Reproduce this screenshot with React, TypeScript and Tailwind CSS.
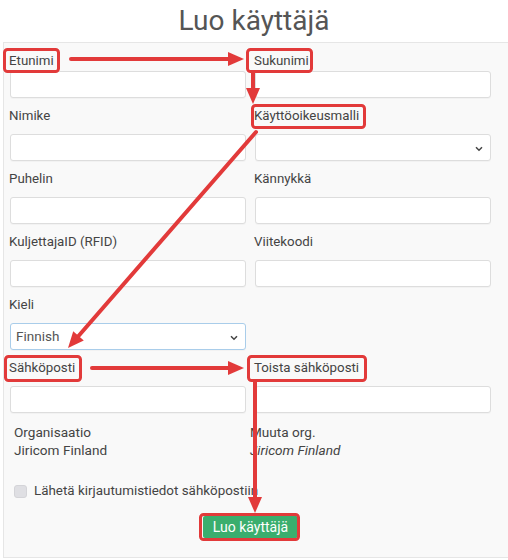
import React from "react";

const RED = "#e23a3a";

function Arrow({ x1, y1, x2, y2 }: { x1: number; y1: number; x2: number; y2: number }) {
  const dx = x2 - x1;
  const dy = y2 - y1;
  const len = Math.sqrt(dx * dx + dy * dy);
  const ux = dx / len;
  const uy = dy / len;
  const hl = 16;
  const hw = 7;
  const bx = x2 - ux * hl;
  const by = y2 - uy * hl;
  const px = -uy;
  const py = ux;
  const pts = `${x2},${y2} ${bx + px * hw},${by + py * hw} ${bx - px * hw},${by - py * hw}`;
  return (
    <g>
      <line x1={x1} y1={y1} x2={bx + ux * 2} y2={by + uy * 2} stroke={RED} strokeWidth={4} strokeLinecap="round" />
      <polygon points={pts} fill={RED} />
    </g>
  );
}

function Field({ label, first, select, value, focus }: { label: string; first?: boolean; select?: boolean; value?: string; focus?: boolean }) {
  return (
    <div className="flex flex-col">
      <div className={`h-5 leading-5 text-[13.3px] text-[#444] -ml-[1px] ${first ? "mb-0" : "mb-2"}`}>{label}</div>
      <div
        className={`relative h-[27px] rounded-[3px] bg-white border ${focus ? "border-[#a9cdea]" : "border-[#dddddd]"} shadow-[0_1px_1px_rgba(0,0,0,0.03)] flex items-center px-[5px] text-[13.5px] text-[#555]`}
      >
        {value}
        {select && (
          <svg className="absolute right-[7px] top-[11px]" width="8" height="6" viewBox="0 0 8 6">
            <path d="M1 1.2 L4 4.2 L7 1.2" fill="none" stroke="#444" strokeWidth="1.5" />
          </svg>
        )}
      </div>
    </div>
  );
}

export default function App() {
  return (
    <div className="relative w-[508px] h-[560px] bg-white overflow-hidden font-['Roboto',sans-serif]">
      <h1 className="h-[42px] text-center text-[28px] leading-[42px] text-[#555] font-normal">Luo käyttäjä</h1>
      <div className="ml-[3px] w-[520px] h-[516px] border border-[#e6e6e6] bg-[#f9f9f9] pl-[6px] pt-[8px]">
        <div className="w-[481px] grid grid-cols-[236px_236px] gap-x-[9px] gap-y-[8px]">
          <Field label="Etunimi" first />
          <Field label="Sukunimi" first />
          <Field label="Nimike" />
          <Field label="Käyttöoikeusmalli" select />
          <Field label="Puhelin" />
          <Field label="Kännykkä" />
          <Field label="KuljettajaID (RFID)" />
          <Field label="Viitekoodi" />
          <Field label="Kieli" select value="Finnish" focus />
          <div />
          <Field label="Sähköposti" />
          <Field label="Toista sähköposti" />
        </div>
        <div className="mt-[10px] grid grid-cols-[236px_1fr] pl-[4px] text-[13.6px] leading-[18px] text-[#444]">
          <div>
            <div>Organisaatio</div>
            <div>Jiricom Finland</div>
          </div>
          <div>
            <div>Muuta org.</div>
            <div className="italic">Jiricom Finland</div>
          </div>
        </div>
        <div className="mt-[22px] pl-[4px] h-5 flex items-center gap-[7px] text-[13.4px] text-[#444]">
          <div className="w-[13px] h-[13px] rounded-[3px] bg-[#dfdfe3] border border-[#d4d4d8]" />
          <span>Lähetä kirjautumistiedot sähköpostiin</span>
        </div>
        <div className="w-[481px] flex justify-center mt-[15px]">
          <div className="h-[22px] w-[95px] bg-[#3aae6e] text-white text-[14px] leading-[22px] text-center rounded-[2px]">
            Luo käyttäjä
          </div>
        </div>
      </div>
      <svg className="absolute inset-0 pointer-events-none" width="508" height="560" viewBox="0 0 508 560">
        <g fill="none" stroke={RED} strokeWidth={3}>
          <rect x={4.5} y={49.5} width={54} height={22} rx={3} />
          <rect x={247.5} y={49.5} width={64} height={22} rx={3} />
          <rect x={252.5} y={105.5} width={112} height={22} rx={3} />
          <rect x={5.5} y={356.5} width={75} height={24} rx={3} />
          <rect x={248.5} y={356.5} width={117} height={24} rx={3} />
          <rect x={200.5} y={514.5} width={98} height={25} rx={3} />
        </g>
        <Arrow x1={71} y1={59} x2={244} y2={59} />
        <Arrow x1={253} y1={72} x2={253} y2={104} />
        <Arrow x1={256} y1={132} x2={68} y2={348} />
        <Arrow x1={92} y1={368} x2={244} y2={368} />
        <Arrow x1={255} y1={382} x2={255} y2={513} />
      </svg>
    </div>
  );
}
